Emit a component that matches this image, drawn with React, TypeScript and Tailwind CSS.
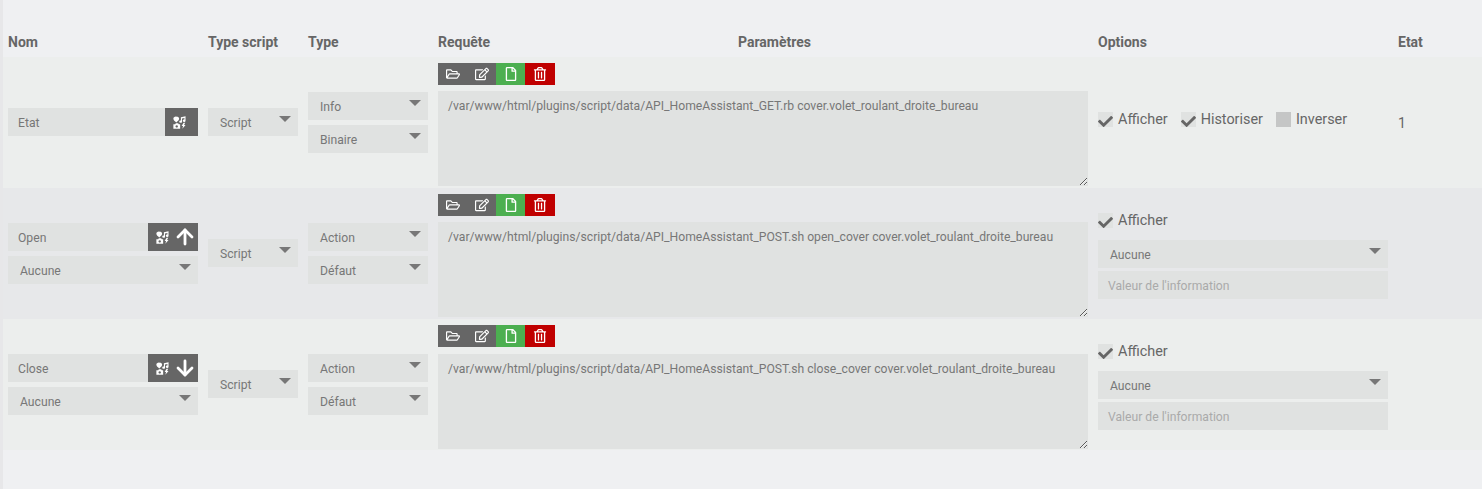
import React from "react";
import { FaRegFolderOpen, FaRegEdit, FaRegFile, FaRegTrashAlt, FaCheck } from "react-icons/fa";
import { ArrowUp, ArrowDown } from "lucide-react";

const CmdIcon = () => (
  <svg viewBox="0 0 14 14" className="w-[13px] h-[13px] shrink-0" fill="#fff">
    <path d="M3.200.6C1.500.6.400 1.600.400 3c0 1.700 1.700 2.700 3.100 3.900C4.900 5.700 6.600 4.700 6.600 3 6.600 1.600 5.500.6 3.800.6 3.600.6 3.500.9 3.500 1 3.400.9 3.400.6 3.200.6Z" />
    <path d="M8.500 1.400l5-1v4.700a1.500 1.300 0 1 1-1.200-1.300V2.100L9.700 2.700v3.400a1.500 1.300 0 1 1-1.200-1.300Z" />
    <path fillRule="evenodd" d="M.4 9h1.900l.8-1.300h2.400L6.300 9h1.400v4.800H.4ZM4 9.900a1.300 1.300 0 1 0 .01 0Z" />
    <path d="M11.400 7.400L9.300 10.800h1.500l-.7 3 3.400-4h-1.600l1.200-2.400Z" />
  </svg>
);

const Caret = () => <span className="w-0 h-0 mt-[8px] shrink-0 border-x-[6px] border-t-[6px] border-x-transparent border-t-[#777]" />;

const Select = ({ label }: { label: string }) => (
  <div className="h-[28px] bg-[#e0e2e1] pl-[12px] pr-[7px] flex justify-between items-start text-[12.16px] leading-[30px] text-[#777]">
    <span>{label}</span>
    <Caret />
  </div>
);

const Name = ({ label, arrow }: { label: string; arrow?: "up" | "down" }) => (
  <div className="h-[28px] bg-[#e0e2e1] pl-[10px] flex justify-between text-[12.16px] leading-[30px] text-[#777]">
    <span>{label}</span>
    <div className={`bg-[#666] h-full flex items-center pl-[8px] ${arrow ? "w-[50px] gap-[4px]" : "w-[33px]"}`}>
      <CmdIcon />
      {arrow === "up" && <ArrowUp size={24} strokeWidth={2.8} color="#fff" className="shrink-0" />}
      {arrow === "down" && <ArrowDown size={24} strokeWidth={2.8} color="#fff" className="shrink-0" />}
    </div>
  </div>
);

const Check = ({ label, on = true }: { label: string; on?: boolean }) => (
  <div className="flex items-center gap-[5px] text-[14.4px] leading-[15px] text-[#666]">
    <span className={`w-[15px] h-[15px] flex items-end ${on ? "bg-[#e0e2e1]" : "bg-[#c5c6c6]"}`}>
      {on && <FaCheck size={15} color="#666" className="translate-y-[2px]" />}
    </span>
    <span>{label}</span>
  </div>
);

const Request = ({ value, last }: { value: string; last?: boolean }) => (
  <div className={`flex flex-col pt-[6px] px-[5px] h-full ${last ? "gap-[7px] pb-[1px]" : "gap-[6px] pb-[2px]"}`}>
    <div className="flex h-[22px] text-white text-[14px]">
      <span className="w-[29px] bg-[#666] flex items-center justify-center"><FaRegFolderOpen /></span>
      <span className="w-[29px] bg-[#666] flex items-center justify-center"><FaRegEdit /></span>
      <span className="w-[29px] bg-[#4caf50] flex items-center justify-center"><FaRegFile /></span>
      <span className="w-[30px] bg-[#c00000] flex items-center justify-center"><FaRegTrashAlt /></span>
    </div>
    <textarea
      readOnly
      value={value}
      className="flex-1 w-full bg-[#e0e2e1] text-[12.16px] leading-[17px] text-[#777] px-[10px] pt-[7px] pb-[5px] outline-none"
    />
  </div>
);

const Cell = ({ children, single }: { children: React.ReactNode; single?: boolean }) => (
  <div className={`flex flex-col justify-center gap-[5px] px-[5px] ${single ? "pb-[1px]" : ""}`}>{children}</div>
);

const ActionOptions = () => (
  <div className="px-[5px] pt-[25px] flex flex-col">
    <Check label="Afficher" />
    <div className="mt-[12px] flex flex-col gap-[3px]">
      <Select label="Aucune" />
      <div className="h-[28px] bg-[#e0e2e1] pl-[10px] text-[12.16px] leading-[30px] text-[#aaa]">Valeur de l'information</div>
    </div>
  </div>
);

const Row = ({ name, arrow, value, info }: { name: string; arrow?: "up" | "down"; value: string; info?: boolean }) => (
  <div className={`grid grid-cols-[200px_100px_130px_660px_300px_1fr] h-[131px] ${arrow === "up" ? "bg-[#e7e8ea]" : "bg-[#eceeed]"}`}>
    <Cell single={!arrow}>
      <Name label={name} arrow={arrow} />
      {arrow && <Select label="Aucune" />}
    </Cell>
    <Cell single><Select label="Script" /></Cell>
    <Cell>
      <Select label={info ? "Info" : "Action"} />
      <Select label={info ? "Binaire" : "Défaut"} />
    </Cell>
    <Request value={value} last={arrow === "down"} />
    {info ? (
      <div className="px-[5px] pt-[55px] flex gap-[13px] items-start">
        <Check label="Afficher" />
        <Check label="Historiser" />
        <Check label="Inverser" on={false} />
      </div>
    ) : (
      <ActionOptions />
    )}
    <div className="px-[5px] pt-[56px] text-[14px] leading-[20px] text-[#666]">{info ? "1" : ""}</div>
  </div>
);

export default function App() {
  return (
    <div className="w-[1482px] h-[489px] overflow-hidden bg-[#eff0f2] border-l-[3px] border-[#e7e7e9] pt-[26px] font-['Roboto',sans-serif]">
      <div className="grid grid-cols-[200px_100px_130px_305px_355px_300px_1fr] h-[31px] text-[14px] leading-[33px] font-bold text-[#666]">
        <div className="px-[5px]">Nom</div>
        <div className="px-[5px]">Type script</div>
        <div className="px-[5px]">Type</div>
        <div className="px-[5px]">Requête</div>
        <div>Paramètres</div>
        <div className="px-[5px]">Options</div>
        <div className="px-[5px]">Etat</div>
      </div>
      <Row name="Etat" info value="/var/www/html/plugins/script/data/API_HomeAssistant_GET.rb cover.volet_roulant_droite_bureau" />
      <Row name="Open" arrow="up" value="/var/www/html/plugins/script/data/API_HomeAssistant_POST.sh open_cover cover.volet_roulant_droite_bureau" />
      <Row name="Close" arrow="down" value="/var/www/html/plugins/script/data/API_HomeAssistant_POST.sh close_cover cover.volet_roulant_droite_bureau" />
    </div>
  );
}
